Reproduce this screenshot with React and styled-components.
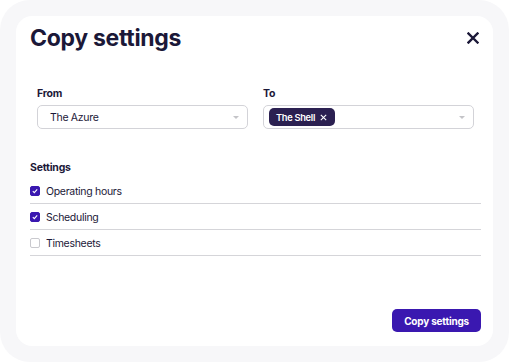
import styled, { createGlobalStyle } from "styled-components"

const GlobalStyle = createGlobalStyle`
    body {
        margin: 0;
        background: #ffffff;
        font-family: Inter, "Noto Sans", sans-serif;
    }
`

const Backdrop = styled.div`
    width: 509px;
    height: 362px;
    box-sizing: border-box;
    padding: 16px;
    background: #f7f7f9;
    border-radius: 30px;
`

const Modal = styled.div`
    height: 100%;
    box-sizing: border-box;
    background: #ffffff;
    border-radius: 16px;
    padding: 10px 12px 14px 14px;
    display: flex;
    flex-direction: column;
`

const Header = styled.div`
    display: flex;
    justify-content: space-between;
    align-items: center;
    height: 24px;
`

const Title = styled.h1`
    margin: 0;
    font-size: 23px;
    font-weight: 700;
    color: #1b1838;
    letter-spacing: -0.3px;
`

const CloseButton = styled.button`
    border: none;
    background: none;
    padding: 0;
    margin-right: 2px;
    width: 12px;
    height: 12px;
    display: flex;
    color: #1b1838;
    cursor: pointer;
`

const Fields = styled.div`
    display: grid;
    grid-template-columns: 211px 211px;
    column-gap: 15px;
    margin: 37px 7px 0 7px;
`

const Field = styled.div`
    display: flex;
    flex-direction: column;
`

const Label = styled.span`
    font-size: 10.5px;
    font-weight: 700;
    color: #1b1838;
    line-height: 13px;
    letter-spacing: -0.2px;
    margin-bottom: 5px;
`

const Select = styled.div`
    height: 24px;
    box-sizing: border-box;
    border: 1px solid #d3d3d8;
    border-radius: 5px;
    display: flex;
    align-items: center;
    justify-content: space-between;
    padding: 0 8px 0 ${props => props.hasChips ? "5px" : "12px"};
    font-size: 10.5px;
    letter-spacing: -0.3px;
    color: #1b1838;
`

const Caret = styled.span`
    width: 0;
    height: 0;
    border-left: 3px solid transparent;
    border-right: 3px solid transparent;
    border-top: 3px solid #c4c4c8;
`

const Chip = styled.span`
    display: inline-flex;
    align-items: center;
    gap: 5px;
    height: 18px;
    padding: 0 8px 0 7px;
    background: #2b2051;
    border-radius: 5px;
    color: #ffffff;
    font-size: 9.3px;
    font-weight: 600;
    letter-spacing: -0.3px;
`

const SettingsTitle = styled.div`
    margin-top: 32px;
    font-size: 10.5px;
    font-weight: 700;
    color: #1b1838;
    line-height: 13px;
    letter-spacing: -0.2px;
`

const SettingsList = styled.div`
    margin-top: 4px;
    display: flex;
    flex-direction: column;
`

const SettingRow = styled.label`
    display: flex;
    align-items: center;
    gap: 6px;
    height: 26px;
    box-sizing: border-box;
    border-bottom: 1px solid #d5d5d9;
    font-size: 10.5px;
    letter-spacing: -0.3px;
    color: #1b1838;
    padding-top: 1px;
`

const Box = styled.span`
    width: 10px;
    height: 10px;
    box-sizing: border-box;
    border-radius: 2px;
    display: flex;
    align-items: center;
    justify-content: center;
    background: ${props => props.checked ? "#3a18b0" : "#ffffff"};
    border: 1px solid ${props => props.checked ? "#3a18b0" : "#c9c9ce"};
`

const Footer = styled.div`
    margin-top: auto;
    display: flex;
    justify-content: flex-end;
`

const PrimaryButton = styled.button`
    height: 23px;
    padding: 0 12px;
    border: none;
    border-radius: 5px;
    background: #3a18b0;
    color: #ffffff;
    font-family: Inter, "Noto Sans", sans-serif;
    font-size: 10px;
    font-weight: 700;
    letter-spacing: -0.2px;
    cursor: pointer;
`

const settings = [
    { name: "Operating hours", checked: true },
    { name: "Scheduling", checked: true },
    { name: "Timesheets", checked: false },
]

const App = () => {
    return (
        <>
            <GlobalStyle />
            <Backdrop>
                <Modal>
                    <Header>
                        <Title>Copy settings</Title>
                        <CloseButton>
                            <svg width="12" height="12" viewBox="0 0 12 12">
                                <path d="M1.5 1.5L10.5 10.5M10.5 1.5L1.5 10.5" stroke="currentColor" strokeWidth="2.4" strokeLinecap="square" />
                            </svg>
                        </CloseButton>
                    </Header>
                    <Fields>
                        <Field>
                            <Label>From</Label>
                            <Select>
                                The Azure
                                <Caret />
                            </Select>
                        </Field>
                        <Field>
                            <Label>To</Label>
                            <Select hasChips>
                                <Chip>
                                    The Shell
                                    <svg width="7" height="7" viewBox="0 0 7 7">
                                        <path d="M0.8 0.8L6.2 6.2M6.2 0.8L0.8 6.2" stroke="#ffffff" strokeWidth="1.1" />
                                    </svg>
                                </Chip>
                                <Caret />
                            </Select>
                        </Field>
                    </Fields>
                    <SettingsTitle>Settings</SettingsTitle>
                    <SettingsList>
                        {settings.map(s => (
                            <SettingRow key={s.name}>
                                <Box checked={s.checked}>
                                    {s.checked && (
                                        <svg width="6" height="6" viewBox="0 0 6 6">
                                            <path d="M0.8 3.2L2.3 4.6L5.2 1.4" stroke="#ffffff" strokeWidth="1.1" fill="none" />
                                        </svg>
                                    )}
                                </Box>
                                {s.name}
                            </SettingRow>
                        ))}
                    </SettingsList>
                    <Footer>
                        <PrimaryButton>Copy settings</PrimaryButton>
                    </Footer>
                </Modal>
            </Backdrop>
        </>
    )
}

export default App
